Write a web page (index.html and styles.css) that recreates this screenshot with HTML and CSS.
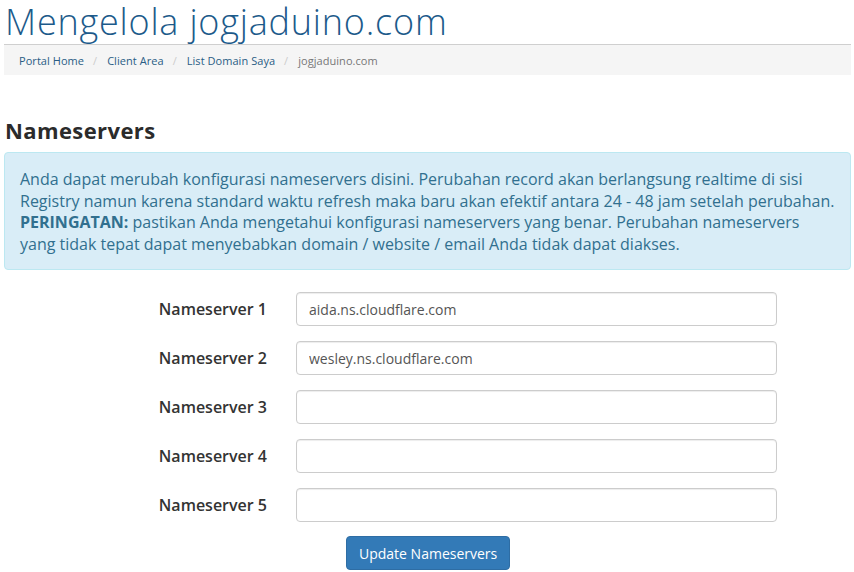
FILE: index.html
```html
<!DOCTYPE html>
<html>
<head>
<meta charset="utf-8">
<link rel="stylesheet" href="styles.css">
</head>
<body>
<div class="page">
  <h1 class="title">Mengelola jogjaduino.com</h1>
  <ol class="breadcrumb">
    <li><a href="#">Portal Home</a></li>
    <li><a href="#">Client Area</a></li>
    <li><a href="#">List Domain Saya</a></li>
    <li class="active">jogjaduino.com</li>
  </ol>
  <h3 class="section">Nameservers</h3>
  <div class="alert">
    Anda dapat merubah konfigurasi nameservers disini. Perubahan record akan berlangsung realtime di sisi<br>Registry namun karena standard waktu refresh maka baru akan efektif antara 24 - 48 jam setelah perubahan.<br><strong>PERINGATAN:</strong> pastikan Anda mengetahui konfigurasi nameservers yang benar. Perubahan nameservers<br>yang tidak tepat dapat menyebabkan domain / website / email Anda tidak dapat diakses.
  </div>
  <form class="ns-form">
    <div class="row"><label class="lbl">Nameserver 1</label><input class="field" value="aida.ns.cloudflare.com"></div>
    <div class="row"><label class="lbl">Nameserver 2</label><input class="field" value="wesley.ns.cloudflare.com"></div>
    <div class="row"><label class="lbl">Nameserver 3</label><input class="field" value=""></div>
    <div class="row"><label class="lbl">Nameserver 4</label><input class="field" value=""></div>
    <div class="row"><label class="lbl">Nameserver 5</label><input class="field" value=""></div>
    <div class="actions"><button type="button" class="btn">Update Nameservers</button></div>
  </form>
</div>
</body>
</html>
```
FILE: styles.css
```css
html, body { margin: 0; padding: 0; background: #fff; }
body { font-family: "Open Sans", "Liberation Sans", sans-serif; color: #333; }
.page { padding: 0 3px 0 4px; }
.title {
  margin: 0;
  padding: 0 0 0 1px;
  font-family: "Open Sans", sans-serif;
  font-weight: 300;
  font-size: 36px;
  line-height: 44px;
  letter-spacing: 0.8px;
  color: #1c5a8a;
  white-space: nowrap;
}
.breadcrumb {
  list-style: none;
  margin: 0;
  padding: 0 15px;
  height: 30px;
  border-top: 1px solid #cfcfcf;
  background: #f5f5f5;
  display: flex;
  align-items: center;
  font-size: 11px;
  letter-spacing: 0.05px;
}
.breadcrumb li { color: #777; }
.breadcrumb li a { color: #2a5d85; text-decoration: none; }
.breadcrumb li + li::before { content: "/"; color: #ccc; padding: 0 10px 0 9px; }
.section {
  margin: 41px 0 0 1px;
  font-family: "Open Sans", sans-serif;
  font-weight: 700;
  font-size: 22px;
  line-height: 28px;
  color: #2b2b2b;
  letter-spacing: 0.4px;
}
.alert {
  margin-top: 8px;
  background: #d9edf7;
  border: 1px solid #bce8f1;
  border-radius: 4px;
  color: #31708f;
  padding: 16px 10px 14px 15px;
  font-size: 16px;
  line-height: 21.5px;
  white-space: nowrap;
}
.alert strong { font-weight: 700; }
.ns-form { padding-top: 22px; }
.row {
  display: grid;
  grid-template-columns: 263px 481px;
  column-gap: 29px;
  align-items: center;
  margin-bottom: 15px;
}
.lbl {
  text-align: right;
  font-weight: 600;
  font-size: 16px;
  color: #333;
}
.field {
  box-sizing: border-box;
  height: 34px;
  width: 481px;
  border: 1px solid #ccc;
  border-radius: 4px;
  padding: 0 12px;
  font-family: "Open Sans", sans-serif;
  font-size: 14px;
  color: #555;
  background: #fff;
  box-shadow: inset 0 1px 1px rgba(0,0,0,0.075);
  outline: none;
}
.actions { padding-left: 342px; margin-top: -1px; }
.btn {
  height: 34px;
  padding: 0 12px;
  background: #337ab7;
  border: 1px solid #2e6da4;
  border-radius: 4px;
  color: #fff;
  font-family: "Open Sans", sans-serif;
  font-size: 14px;
}
```
